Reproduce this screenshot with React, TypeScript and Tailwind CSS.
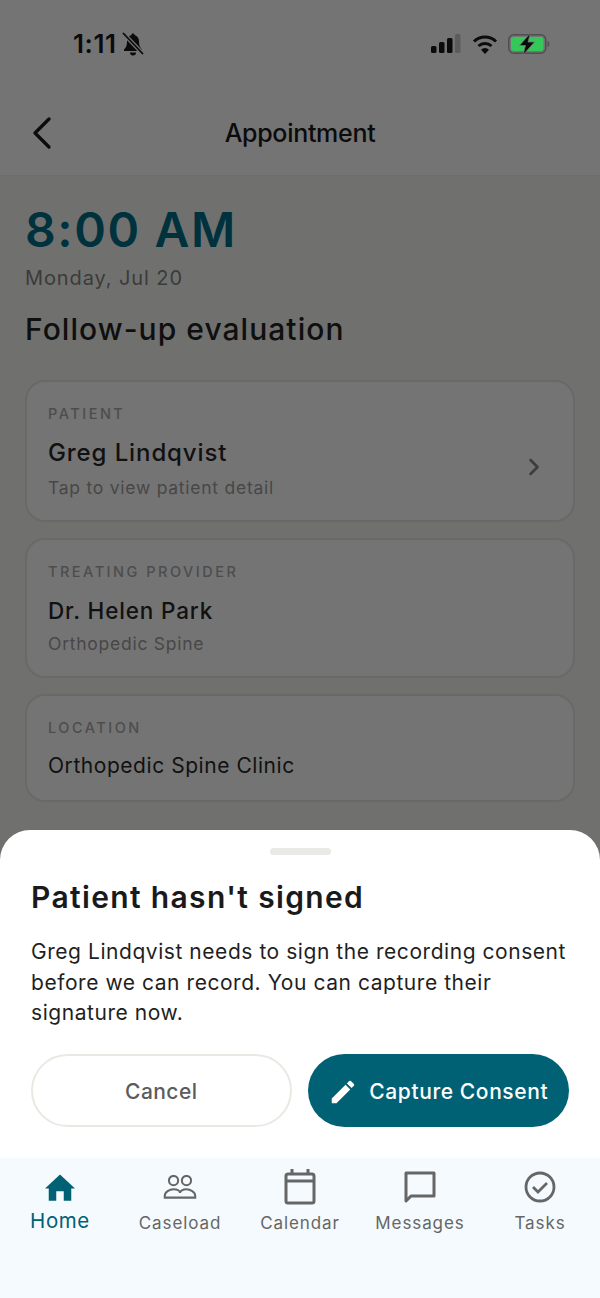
import { ChevronRight } from "lucide-react"

const font = "font-['Inter',sans-serif]"

function StatusBar() {
  return (
    <div className="h-[88px] flex items-start justify-between pt-[29px] pl-[73px] pr-[50px]">
      <div className="flex items-center gap-[5px] h-[30px]">
        <span className="text-[26px] leading-[30px] font-semibold tracking-[0.6px] text-[#0b0b0b]">1:11</span>
        <svg width="22" height="24" viewBox="0 0 22 24" fill="none">
          <path d="M11 1.500c-1 0-1.600.7-1.600 1.600C6.500 4 5 6.400 5 9.500c0 4-1 6-3 8v1.500h18v-1.500c-2-2-3-4-3-8 0-3.100-1.500-5.500-4.400-6.400 0-.9-.6-1.600-1.600-1.600z" fill="#0b0b0b" />
          <path d="M8 20.500h6a3 3 0 0 1-6 0z" fill="#0b0b0b" />
          <path d="M1.500 1.500l19 20" stroke="#747474" strokeWidth="4" />
          <path d="M1.500 1.500l19 20" stroke="#0b0b0b" strokeWidth="1.800" strokeLinecap="round" />
        </svg>
      </div>
      <div className="flex items-center gap-[10px] h-[30px]">
        <svg width="30" height="20" viewBox="0 0 30 20" className="-ml-[3px] mr-[1px]">
          <rect x="0" y="12" width="5.500" height="7" rx="1.500" fill="#0b0b0b" />
          <rect x="8" y="8" width="5.500" height="11" rx="1.500" fill="#0b0b0b" />
          <rect x="16" y="4" width="5.500" height="15" rx="1.500" fill="#0b0b0b" />
          <rect x="24" y="0" width="5.500" height="19" rx="1.500" fill="#5c5c5c" />
        </svg>
        <svg width="26" height="20" viewBox="0 0 26 20" fill="none">
          <path d="M2 7.500a15.500 15.500 0 0 1 22 0" stroke="#0b0b0b" strokeWidth="3" />
          <path d="M6.500 12a9.500 9.500 0 0 1 13 0" stroke="#0b0b0b" strokeWidth="3" />
          <path d="M13 20l-4-4.200a5.600 5.600 0 0 1 8 0z" fill="#0b0b0b" />
        </svg>
        <svg width="42" height="22" viewBox="0 0 42 22">
          <rect x="0.750" y="1.750" width="37" height="18.500" rx="5" fill="none" stroke="#4f4f4f" strokeWidth="1.500" />
          <rect x="3" y="4" width="32.500" height="14" rx="3" fill="#34c759" />
          <path d="M39.500 8v6c1.200-.4 1.800-1.600 1.800-3s-.6-2.600-1.800-3z" fill="#4f4f4f" />
          <path d="M22.500 0L11.500 12.500h6L15 22l11.500-13h-6.500z" fill="#0b0b0b" stroke="#747474" strokeWidth="0.800" />
        </svg>
      </div>
    </div>
  )
}

function InfoCard({
  label,
  title,
  titleClass,
  sub,
  subClass,
  chevron,
  className,
}: {
  label: string
  title: string
  titleClass: string
  sub?: string
  subClass?: string
  chevron?: boolean
  className: string
}) {
  return (
    <div className={`relative rounded-[20px] border-2 border-[#696a68] bg-[#747474] pl-[21px] pr-[30px] pt-[22px] ${className}`}>
      <div className="text-[14.500px] leading-[20px] font-medium tracking-[2.500px] text-[#4d4d4d]">{label}</div>
      <div className={`text-[#111111] ${titleClass}`}>{title}</div>
      {sub && <div className={`text-[17.500px] leading-[26px] tracking-[0.75px] text-[#474747] ${subClass}`}>{sub}</div>}
      {chevron && (
        <ChevronRight className="absolute right-[25px] top-[85px] -translate-y-1/2 w-[28px] h-[28px] text-[#3d3d3d]" strokeWidth={2.2} />
      )}
    </div>
  )
}

function NavItem({ label, active, icon }: { label: string; active?: boolean; icon: React.ReactNode }) {
  return (
    <div className="flex flex-col items-center">
      <div className="h-[50px] flex items-center justify-center">{icon}</div>
      <div
        className={
          active
            ? "text-[20.500px] leading-[26px] tracking-[0.6px] text-[#006175] -mt-[4px]"
            : "text-[17px] leading-[26px] tracking-[0.9px] text-[#666666] -mt-[2px]"
        }
      >
        {label}
      </div>
    </div>
  )
}

export default function App() {
  return (
    <div className={`relative w-[600px] h-[1298px] overflow-hidden bg-[#70716f] ${font}`}>
      <div className="bg-[#747474] h-[176px] border-b border-[#6e6e6e]">
        <StatusBar />
        <div className="relative h-[87px] flex items-start justify-center pt-[28px]">
          <svg width="20" height="32" viewBox="0 0 20 32" fill="none" className="absolute left-[32px] top-[29px]">
            <path d="M17 2L3 16l14 14" stroke="#0b0b0b" strokeWidth="3.200" strokeLinecap="round" strokeLinejoin="round" />
          </svg>
          <span className="text-[25px] leading-[34px] font-medium tracking-[-0.3px] text-[#0b0b0b]">Appointment</span>
        </div>
      </div>

      <div className="px-[25px]">
        <div className="mt-[26px] text-[48px] leading-[56px] font-semibold tracking-[1.6px] text-[#00323e]">8:00 AM</div>
        <div className="mt-[6px] text-[20px] leading-[28px] tracking-[0.9px] text-[#3b3b3b]">Monday, Jul 20</div>
        <div className="mt-[18px] text-[30px] leading-[38px] font-medium tracking-[1.050px] text-[#0f0f0f]">Follow-up evaluation</div>

        <div className="mt-[32px] flex flex-col gap-[16px]">
          <InfoCard
            className="h-[142px]"
            label="PATIENT"
            title="Greg Lindqvist"
            titleClass="mt-[13px] text-[24px] leading-[32px] font-medium tracking-[0.9px]"
            sub="Tap to view patient detail"
            subClass="mt-[6px]"
            chevron
          />
          <InfoCard
            className="h-[140px]"
            label="TREATING PROVIDER"
            title="Dr. Helen Park"
            titleClass="mt-[14px] text-[22.500px] leading-[30px] font-medium tracking-[0.85px]"
            sub="Orthopedic Spine"
            subClass="mt-[5px]"
          />
          <InfoCard
            className="h-[108px]"
            label="LOCATION"
            title="Orthopedic Spine Clinic"
            titleClass="mt-[13px] text-[21px] leading-[30px] tracking-[0.55px]"
          />
        </div>
      </div>

      <div className="absolute inset-x-0 bottom-0">
        <div className="rounded-t-[30px] bg-white px-[31px] h-[328px]">
          <div className="pt-[18px] flex justify-center">
            <div className="w-[61px] h-[7px] rounded-full bg-[#e9eae5]" />
          </div>
          <div className="mt-[22px] text-[30px] leading-[40px] font-semibold tracking-[1.350px] text-[#1a1a1a]">Patient hasn't signed</div>
          <div className="mt-[20px] text-[21px] leading-[30.500px] tracking-[0.55px] text-[#1f1f1f]">
            Greg Lindqvist needs to sign the recording consent before we can record. You can capture their signature now.
          </div>
          <div className="mt-[25px] flex gap-[16px]">
            <button className="w-[261px] h-[73px] pt-[3px] rounded-full border-2 border-[#e9e9e4] text-[21px] font-medium tracking-[0.45px] text-[#5c5c5c]">
              Cancel
            </button>
            <button className="w-[262px] h-[73px] pt-[3px] rounded-full bg-[#006175] flex items-center justify-center gap-[11px] text-[21px] font-medium tracking-[0.6px] text-white">
              <svg width="30" height="30" viewBox="0 0 24 24" fill="#ffffff">
                <path d="M3 17.250V21h3.750L17.810 9.940l-3.750-3.750L3 17.250zM20.710 7.040a.996.996 0 0 0 0-1.410l-2.340-2.340a.996.996 0 0 0-1.410 0l-1.830 1.830 3.750 3.750 1.830-1.830z" />
              </svg>
              Capture Consent
            </button>
          </div>
        </div>
        <div className="h-[140px] bg-[#f4fafd] grid grid-cols-5 pt-[4px]">
          <NavItem
            label="Home"
            active
            icon={
              <svg width="30" height="27" viewBox="0 0 32 28">
                <path d="M16 0L32 15h-4v13h-8V18h-8v10H4V15H0z" fill="#006175" />
              </svg>
            }
          />
          <NavItem
            label="Caseload"
            icon={
              <svg width="34" height="24" viewBox="0 0 36 26" fill="none" stroke="#666666" strokeWidth="2.200">
                <circle cx="11" cy="6" r="5" />
                <circle cx="25" cy="6" r="5" />
                <path d="M1.500 24.500v-2c0-4 5-7 9.500-7s7 2 7 4c0-2 3-4 7-4s9.500 3 9.500 7v2z" />
              </svg>
            }
          />
          <NavItem
            label="Calendar"
            icon={
              <svg width="32" height="36" viewBox="0 0 32 36" fill="none" stroke="#666666" strokeWidth="3">
                <rect x="2" y="5" width="28" height="29" rx="2" />
                <path d="M2 12h28M8 0v5M24 0v5" />
              </svg>
            }
          />
          <NavItem
            label="Messages"
            icon={
              <svg width="32" height="32" viewBox="0 0 32 32" fill="none" stroke="#666666" strokeWidth="3">
                <path d="M2 2h28v23H7l-5 5z" strokeLinejoin="round" />
              </svg>
            }
          />
          <NavItem
            label="Tasks"
            icon={
              <svg width="32" height="32" viewBox="0 0 32 32" fill="none" stroke="#666666" strokeWidth="2.800">
                <circle cx="16" cy="16" r="14" />
                <path d="M9 16l5 5 9-9" />
              </svg>
            }
          />
        </div>
      </div>
    </div>
  )
}
